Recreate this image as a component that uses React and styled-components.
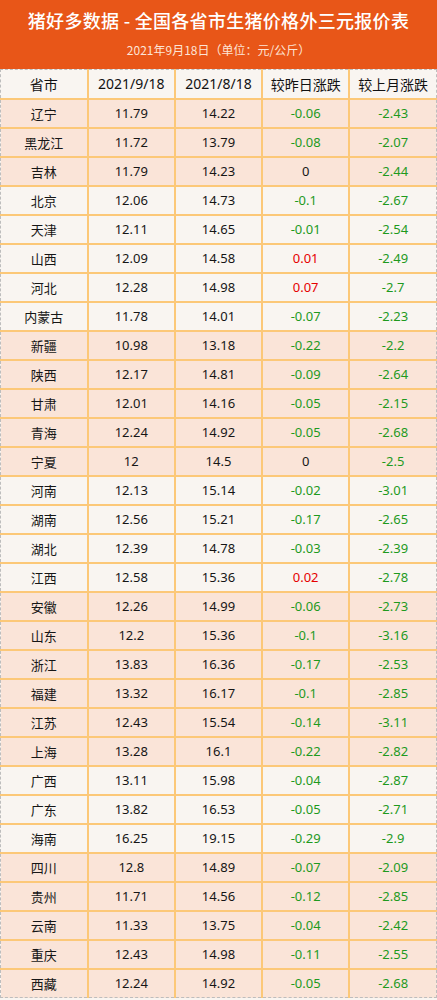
import React from 'react';
import styled, { createGlobalStyle } from 'styled-components';

const GlobalStyle = createGlobalStyle`
  html, body {
    margin: 0;
    padding: 0;
    background: #ffffff;
  }
  body {
    font-family: "Noto Sans", "Noto Sans CJK SC", sans-serif;
  }
`;

const Page = styled.div`
  width: 437px;
  height: 1000px;
  overflow: hidden;
  background: #f9f5f1;
`;

const Banner = styled.header`
  height: 69px;
  background: #e85618;
  color: #ffffff;
  display: flex;
  flex-direction: column;
  align-items: center;
  box-sizing: border-box;
  padding-top: 5px;
`;

const Title = styled.h1`
  margin: 0;
  font-family: "Noto Sans CJK SC", sans-serif;
  font-size: 18px;
  font-weight: 500;
  line-height: 30px;
  letter-spacing: 0.3px;
`;

const Subtitle = styled.div`
  margin-top: 6px;
  font-family: "Noto Sans CJK SC", sans-serif;
  font-size: 12px;
  line-height: 18px;
  color: #fde4d6;
`;

const Table = styled.table`
  width: 437px;
  border-collapse: collapse;
  table-layout: fixed;
  border: 1px dashed #bdbdbd;
`;

const Row = styled.tr`
  height: 29px;
  background: ${p => (p.$shade ? '#fae4d8' : '#f9f5f1')};
`;

const Cell = styled.td`
  padding: 0;
  text-align: center;
  font-family: "Noto Sans", "Noto Sans CJK SC", sans-serif;
  font-size: 13px;
  color: ${p => (p.$tone === 'down' ? '#1e9a1e' : p.$tone === 'up' ? '#e60000' : '#161616')};
  border-left: 2px solid #fcc878;
  border-top: 2px solid #fcc878;
  &:first-child {
    border-left: none;
  }
`;

const HeadCell = styled(Cell).attrs({ as: 'th' })`
  font-size: 14px;
  font-weight: 400;
  color: #111111;
  border-top: none;
`;

const rows = [
  ['辽宁', '11.79', '14.22', '-0.06', '-2.43', 1],
  ['黑龙江', '11.72', '13.79', '-0.08', '-2.07', 1],
  ['吉林', '11.79', '14.23', '0', '-2.44', 1],
  ['北京', '12.06', '14.73', '-0.1', '-2.67', 0],
  ['天津', '12.11', '14.65', '-0.01', '-2.54', 0],
  ['山西', '12.09', '14.58', '0.01', '-2.49', 0],
  ['河北', '12.28', '14.98', '0.07', '-2.7', 0],
  ['内蒙古', '11.78', '14.01', '-0.07', '-2.23', 0],
  ['新疆', '10.98', '13.18', '-0.22', '-2.2', 1],
  ['陕西', '12.17', '14.81', '-0.09', '-2.64', 1],
  ['甘肃', '12.01', '14.16', '-0.05', '-2.15', 1],
  ['青海', '12.24', '14.92', '-0.05', '-2.68', 1],
  ['宁夏', '12', '14.5', '0', '-2.5', 1],
  ['河南', '12.13', '15.14', '-0.02', '-3.01', 0],
  ['湖南', '12.56', '15.21', '-0.17', '-2.65', 0],
  ['湖北', '12.39', '14.78', '-0.03', '-2.39', 0],
  ['江西', '12.58', '15.36', '0.02', '-2.78', 0],
  ['安徽', '12.26', '14.99', '-0.06', '-2.73', 1],
  ['山东', '12.2', '15.36', '-0.1', '-3.16', 1],
  ['浙江', '13.83', '16.36', '-0.17', '-2.53', 1],
  ['福建', '13.32', '16.17', '-0.1', '-2.85', 1],
  ['江苏', '12.43', '15.54', '-0.14', '-3.11', 1],
  ['上海', '13.28', '16.1', '-0.22', '-2.82', 1],
  ['广西', '13.11', '15.98', '-0.04', '-2.87', 0],
  ['广东', '13.82', '16.53', '-0.05', '-2.71', 0],
  ['海南', '16.25', '19.15', '-0.29', '-2.9', 0],
  ['四川', '12.8', '14.89', '-0.07', '-2.09', 1],
  ['贵州', '11.71', '14.56', '-0.12', '-2.85', 1],
  ['云南', '11.33', '13.75', '-0.04', '-2.42', 1],
  ['重庆', '12.43', '14.98', '-0.11', '-2.55', 1],
  ['西藏', '12.24', '14.92', '-0.05', '-2.68', 1],
];

const tone = v => {
  const n = parseFloat(v);
  if (n < 0) return 'down';
  if (n > 0) return 'up';
  return 'flat';
};

export default function App() {
  return (
    <Page>
      <GlobalStyle />
      <Banner>
        <Title>猪好多数据 - 全国各省市生猪价格外三元报价表</Title>
        <Subtitle>2021年9月18日（单位：元/公斤）</Subtitle>
      </Banner>
      <Table>
        <thead>
          <Row>
            <HeadCell>省市</HeadCell>
            <HeadCell>2021/9/18</HeadCell>
            <HeadCell>2021/8/18</HeadCell>
            <HeadCell>较昨日涨跌</HeadCell>
            <HeadCell>较上月涨跌</HeadCell>
          </Row>
        </thead>
        <tbody>
          {rows.map(([name, now, prev, day, month, shade]) => (
            <Row key={name} $shade={!!shade}>
              <Cell>{name}</Cell>
              <Cell>{now}</Cell>
              <Cell>{prev}</Cell>
              <Cell $tone={tone(day)}>{day}</Cell>
              <Cell $tone={tone(month)}>{month}</Cell>
            </Row>
          ))}
        </tbody>
      </Table>
    </Page>
  );
}
